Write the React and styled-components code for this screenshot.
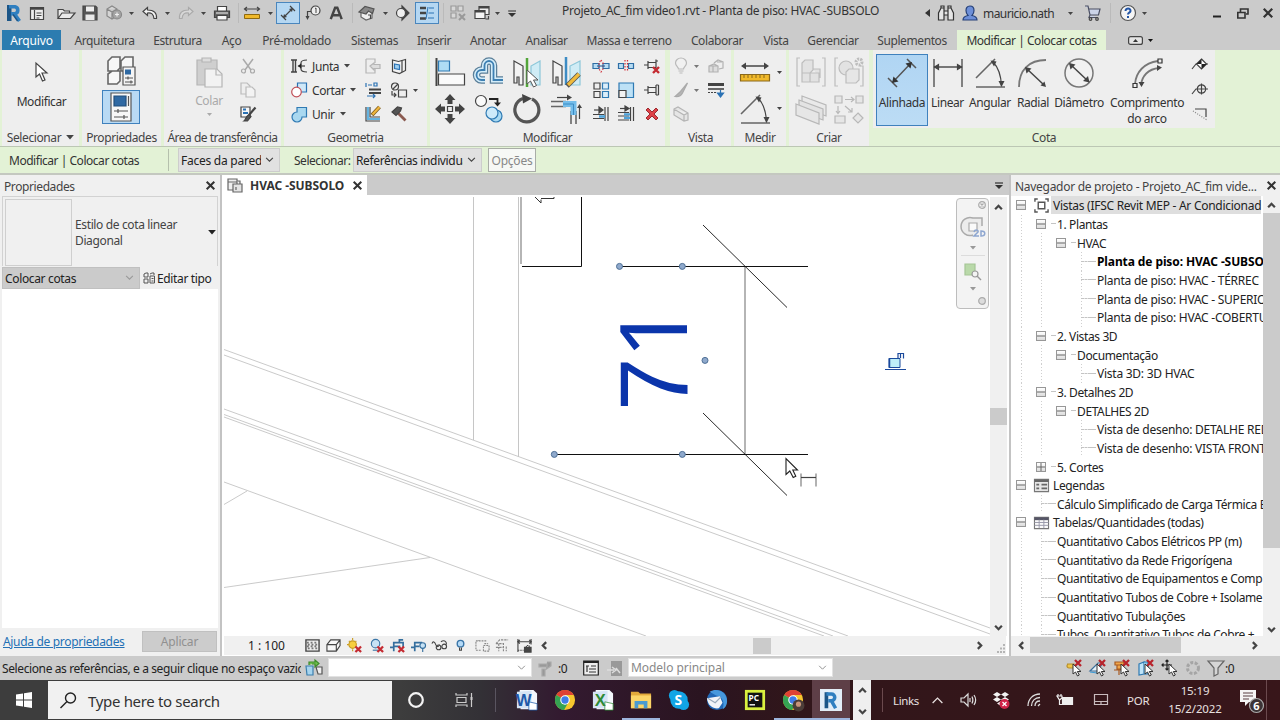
import styled, { createGlobalStyle, css } from 'styled-components';

const GlobalStyle = createGlobalStyle`
  * {
    box-sizing: border-box;
  }
  body {
    margin: 0;
    font-family: "Noto Sans", "Open Sans", sans-serif;
    font-size: 12px;
    color: #333;
    overflow: hidden;
  }
`;

const Glyph = styled.svg`
  display: block;
  flex: none;
  fill: none;
  stroke: #444;
  stroke-width: 1.2;
  overflow: visible;
`;

const Window = styled.div`
  display: flex;
  flex-direction: column;
  width: 1280px;
  height: 720px;
  background: #cbcbcb;
  overflow: hidden;
`;

const Label = styled.span`
  padding-top: 2px;
  white-space: nowrap;
  font-size: ${p => p.$size || 12}px;
  letter-spacing: ${p => p.$ls ?? -0.4}px;
  line-height: 16px;
  color: ${p => p.$color || 'inherit'};
`;

/* ---------- title bar ---------- */

const TitleBar = styled.header`
  display: flex;
  align-items: center;
  height: 30px;
  flex: none;
  padding: 0 6px 4px 4px;
`;

const Slot = styled.div`
  display: flex;
  align-items: center;
  justify-content: center;
  flex: none;
  width: ${p => p.$w}px;
  height: 22px;
  margin-left: ${p => p.$ml || 0}px;
  ${p => p.$on && css`
    background: #b5d7f2;
    border: 1px solid #4a86bd;
  `}
`;

const Divider = styled.div`
  flex: none;
  width: 1px;
  height: ${p => p.$h || 20}px;
  margin-left: ${p => p.$ml || 0}px;
  background: ${p => p.$color || '#bababa'};
`;

const WindowTitle = styled.div`
  margin-left: 45px;
  flex: 1;
  padding-bottom: 4px;
  line-height: 16px;
`;

/* ---------- tabs ---------- */

const TabRow = styled.nav`
  display: flex;
  align-items: center;
  height: 20px;
  flex: none;
  padding-left: 2px;
`;

const Tab = styled.div`
  display: flex;
  align-items: center;
  justify-content: center;
  flex: none;
  width: ${p => p.$w}px;
  height: 20px;
  background: ${p => p.$bg || 'transparent'};
  margin-right: ${p => p.$mr || 0}px;
`;

/* ---------- ribbon ---------- */

const Ribbon = styled.section`
  display: flex;
  flex: none;
  height: 97px;
  background: #e3f2d6;
  border-bottom: 1px solid #bcc7b4;
  padding-left: 2px;
`;

const PanelBox = styled.div`
  display: flex;
  flex-direction: column;
  flex: none;
  width: ${p => p.$w}px;
  margin-right: ${p => p.$mr ?? 3}px;
  background: ${p => (p.$green ? 'transparent' : '#eeeeee')};
`;

const PanelBody = styled.div`
  display: flex;
  height: 78px;
  padding: ${p => p.$pad || '4px 0 0'};
  background: #eeeeee;
`;

const PanelName = styled.div`
  display: flex;
  align-items: center;
  justify-content: center;
  gap: 5px;
  height: 18px;
`;

const Column = styled.div`
  display: flex;
  flex-direction: column;
  align-items: center;
  flex: none;
  width: ${p => p.$w}px;
  gap: ${p => p.$gap || 0}px;
  padding-top: ${p => p.$pt || 0}px;
`;

const ToolList = styled.div`
  flex: none;
  width: 76px;
  padding-left: 7px;
`;

const IconGrid = styled.div`
  display: grid;
  grid-template-columns: ${p => p.$cols};
  grid-auto-rows: ${p => p.$row}px;
  place-items: center;
  margin-left: ${p => p.$ml || 0}px;
  height: max-content;
`;

const Pressed = styled.div`
  display: flex;
  align-items: center;
  justify-content: center;
  width: 38px;
  height: 34px;
  background: #b9daf4;
  border: 1px solid #3f81bd;
`;

const ToolRow = styled.div`
  display: flex;
  align-items: center;
  height: 24px;
  gap: 5px;
`;

const Tool = styled.div`
  display: flex;
  flex-direction: column;
  align-items: center;
  flex: none;
  width: ${p => p.$w}px;
  height: 72px;
  padding-top: 3px;
  gap: 5px;
  text-align: center;
  border: 1px solid transparent;
  ${p => p.$on && css`
    margin-left: 3px;
    background: linear-gradient(#b0d5f3, #bcdcf5);
    border-color: #3f81bd;
  `}
  ${Label} {
    white-space: normal;
  }
`;

/* ---------- options bar ---------- */

const OptionsBar = styled.div`
  display: flex;
  align-items: center;
  flex: none;
  height: 28px;
  padding: 0 0 1px 9px;
  background: #e3f2d6;
  border-bottom: 2px solid #c4c8c0;
`;

const Select = styled.div`
  display: flex;
  align-items: center;
  flex: none;
  width: ${p => p.$w}px;
  height: ${p => p.$h || 24}px;
  padding: 0 5px 0 2px;
  margin-left: ${p => p.$ml || 0}px;
  background: ${p => p.$bg || '#e1e1e1'};
  border: 1px solid ${p => p.$border || '#cdcdcd'};
  color: ${p => p.$color || '#222'};
`;

const SelectText = styled.div`
  flex: 1;
  min-width: 0;
  overflow: hidden;
  white-space: nowrap;
  margin-right: 4px;
  padding-top: 1px;
  letter-spacing: ${p => p.$ls ?? -0.35}px;
  line-height: 17px;
`;

const OptionsButton = styled.button`
  flex: none;
  width: 48px;
  height: 24px;
  margin-left: 6px;
  padding: 1px 0 0;
  background: #f6f8f5;
  border: 1px solid #a9ada7;
  font: inherit;
  letter-spacing: -0.2px;
  color: #888;
`;

/* ---------- main area ---------- */

const Main = styled.main`
  display: flex;
  flex: none;
  height: 481px;
  background: #eeeeee;
`;

const SidePanel = styled.aside`
  display: flex;
  flex-direction: column;
  width: 220px;
  flex: none;
  background: #f0f0f0;
`;

const PanelHeader = styled.div`
  display: flex;
  align-items: center;
  justify-content: space-between;
  flex: none;
  height: 21px;
  padding: 0 5px 0 4px;
`;

const TypeSelector = styled.div`
  display: flex;
  align-items: center;
  height: 70px;
  margin: 0 2px;
  padding: 2px 1px 0 2px;
  border: 1px solid #d2d2d2;
  border-bottom: 0;
`;

const Thumb = styled.div`
  width: 67px;
  height: 67px;
  border: 1px solid #cfcfcf;
  margin-right: 3px;
`;

const TypeName = styled.div`
  flex: 1;
  line-height: 16px;
  letter-spacing: -0.37px;
  white-space: nowrap;
  color: #444;
`;

const FilterRow = styled.div`
  display: flex;
  align-items: center;
  height: 23px;
  padding-left: 2px;
`;

const PropertyGrid = styled.div`
  flex: 1;
  margin: 0 2px;
  background: #fff;
`;

const SideFooter = styled.div`
  display: flex;
  align-items: center;
  justify-content: space-between;
  height: 28px;
  padding: 0 3px 2px 3px;
`;

const HelpLink = styled.a`
  color: #2471b5;
  text-decoration: underline;
  letter-spacing: -0.32px;
  white-space: nowrap;
`;

const ApplyButton = styled.button`
  width: 75px;
  height: 21px;
  padding: 0;
  border: 1px solid #c0c0c0;
  background: #cccccc;
  color: #909090;
  font: inherit;
  letter-spacing: -0.2px;
`;

const Viewport = styled.section`
  display: flex;
  flex-direction: column;
  width: 791px;
  flex: none;
  border-left: 2px solid #c3c3c3;
  border-right: 2px solid #c3c3c3;
  background: #fff;
`;

const ViewTabs = styled.div`
  display: flex;
  justify-content: space-between;
  align-items: center;
  flex: none;
  height: 20px;
  background: #cbcbcb;
  padding-right: 6px;
  margin-bottom: 2px;
`;

const ViewTab = styled.div`
  display: flex;
  align-items: center;
  width: 145px;
  height: 20px;
  padding-left: 5px;
  gap: 8px;
  background: #fff;
  font-weight: 700;
`;

const ViewRow = styled.div`
  display: flex;
  flex: none;
  height: 439px;
  padding-left: 2px;
  position: relative;
`;

const ScrollV = styled.div`
  display: flex;
  flex-direction: column;
  align-items: center;
  justify-content: space-between;
  flex: none;
  width: 17px;
  padding: ${p => p.$pad || '6px 0 4px'};
  background: #f0f0f0;
`;

const ThumbV = styled.div`
  width: 17px;
  height: ${p => p.$h}px;
  margin-top: ${p => p.$mt}px;
  margin-bottom: auto;
  background: #cbcbcb;
`;

const ViewControls = styled.div`
  display: flex;
  align-items: center;
  flex: none;
  height: 19px;
  margin: 0 3px 0 2px;
  background: #f0f0f0;
`;

const ViewScale = styled.div`
  width: 80px;
  padding-left: 24px;
  line-height: 16px;
  color: #222;
`;

const ThumbH = styled.div`
  width: ${p => p.$w}px;
  height: 16px;
  margin-left: ${p => p.$ml}px;
  background: #cbcbcb;
`;

const NavBar = styled.div`
  position: absolute;
  left: 734px;
  top: 1px;
  width: 33px;
  height: 111px;
  display: flex;
  flex-direction: column;
  align-items: center;
  justify-content: space-between;
  padding: 2px 0 3px;
  border: 1px solid #bdbdbd;
  border-radius: 4px;
  background: #f3f3f3;
`;

const NavLine = styled.div`
  width: 24px;
  height: 1px;
  background: #dcdcdc;
`;

const NavDot = styled.div`
  align-self: flex-end;
  margin-right: 2px;
`;

/* ---------- project browser ---------- */

const Browser = styled.aside`
  display: flex;
  flex-direction: column;
  flex: 1;
  min-width: 0;
  background: #f0f0f0;
`;

const TreeArea = styled.div`
  display: flex;
  height: 440px;
  flex: none;
  background: #fff;
`;

const Tree = styled.div`
  width: 252px;
  overflow: hidden;
  color: #222;
`;

const TreeRow = styled.div`
  display: flex;
  align-items: center;
  height: 18.67px;
  white-space: nowrap;
  font-weight: ${p => (p.$bold ? 700 : 400)};
  color: ${p => (p.$bold ? '#000' : '#222')};
`;

const Cell = styled.div`
  display: flex;
  align-items: center;
  justify-content: center;
  flex: none;
  width: 20px;
  height: 100%;
  background: ${p => (p.$guide
    ? 'repeating-linear-gradient(#cfcfcf 0 1px, transparent 1px 3px) 10px 0 / 1px 100% no-repeat'
    : 'none')};
`;

const Dash = styled.div`
  flex: none;
  width: ${p => p.$w || 6}px;
  margin-left: ${p => p.$ml || 0}px;
  border-top: 1px dashed #c4c4c4;
`;

const Expander = styled.div`
  display: flex;
  align-items: center;
  justify-content: center;
  width: 10px;
  height: 10px;
  background: linear-gradient(#fff, #dcdcdc);
  border: 1px solid #979797;
`;

const TreeText = styled.div`
  flex: none;
  min-width: ${p => (p.$hl ? 210 : 0)}px;
  padding: 1px 0 0 ${p => (p.$root ? 2 : 1)}px;
  line-height: 17px;
  letter-spacing: ${p => p.$ls}px;
  background: ${p => (p.$hl ? '#dedede' : 'none')};
`;

const TreeScroll = styled.div`
  display: flex;
  align-items: center;
  height: 18px;
  width: 252px;
  padding-left: 6px;
`;

/* ---------- status bar ---------- */

const StatusBar = styled.footer`
  display: flex;
  align-items: center;
  flex: none;
  height: 24px;
  padding-left: 2px;
  background: #cbcbcb;
  color: #222;
`;

const StatusField = styled.div`
  width: 299px;
  overflow: hidden;
  white-space: nowrap;
  letter-spacing: -0.39px;
  line-height: 18px;
  padding-top: 1px;
`;

/* ---------- task bar ---------- */

const TaskBar = styled.footer`
  display: flex;
  align-items: center;
  flex: none;
  height: 40px;
  color: #e8e0e0;
  background: linear-gradient(90deg, #3d3d3d 0 400px, #333136 480px, #331a30 560px, #2a1420 700px, #31161a 800px, #38161a 1280px);
`;

const StartButton = styled.div`
  display: flex;
  align-items: center;
  justify-content: center;
  width: 48px;
  height: 40px;
`;

const SearchBox = styled.div`
  display: flex;
  align-items: center;
  width: 344px;
  height: 38px;
  padding-left: 12px;
  gap: 11px;
  background: #f1f1f1;
  color: #333;
  font-size: 15px;
`;

const TaskItem = styled.div`
  display: flex;
  align-items: center;
  justify-content: center;
  flex: none;
  width: ${p => p.$w || 38}px;
  height: 40px;
  margin-left: ${p => p.$ml || 0}px;
  background: ${p => (p.$active ? '#5e3f47' : 'transparent')};
  box-shadow: ${p => (p.$open ? 'inset 0 -2px 0 #9db5dd' : 'none')};
`;

const SpinBox = styled.div`
  display: flex;
  flex-direction: column;
  align-items: center;
  justify-content: space-between;
  width: 18px;
  height: 40px;
  margin-left: 3px;
  padding: 6px 0 4px;
  background: #efefef;
`;

const Clock = styled.div`
  width: 70px;
  margin-left: 8px;
  text-align: center;
  font-size: 11.5px;
  line-height: 18px;
  letter-spacing: -0.15px;
`;

/* ---------- icons ---------- */

const Svg = ({ w = 16, h = w, box, children, ...rest }) => (
  <Glyph width={w} height={h} viewBox={box || `0 0 ${w} ${h}`} {...rest}>{children}</Glyph>
);

const Caret = ({ w = 6, color = '#444' }) => (
  <Svg w={w} h={w / 2 + 0.5} box="0 0 6 3.5"><path d="M0 0h6L3 3.5z" fill={color} stroke="none" /></Svg>
);

const Chevron = ({ dir = 'down', size = 9, color = '#444', sw = 2 }) => {
  const d = {
    down: 'M1 2.5l3 3 3-3',
    up: 'M1 5.5l3-3 3 3',
    left: 'M5.5 1l-3 3 3 3',
    right: 'M2.5 1l3 3-3 3',
  }[dir];
  return <Svg w={size} box="0 0 8 8"><path d={d} stroke={color} strokeWidth={sw} /></Svg>;
};

const Cross = ({ size = 9, color = '#333', sw = 2 }) => (
  <Svg w={size} box="0 0 9 9"><path d="M.7.7l7.6 7.6M8.3.7L.7 8.3" stroke={color} strokeWidth={sw} /></Svg>
);

const RevitR = ({ w = 16, h = 18 }) => (
  <Svg w={w} h={h} box="0 0 16 18">
    <path d="M1 1h4.500v16H1z" fill="#1b5587" stroke="none" />
    <path d="M3 2.800h6a3.600 3.600 0 010 7H5M8.500 10l5 7" stroke="#2f7fc0" strokeWidth="3.600" />
    <path d="M7 10.500l4.600 6.500" stroke="#1b5587" strokeWidth="1.400" />
  </Svg>
);

const RedX = () => <path d="M9 9l6 6M15 9l-6 6" stroke="#c42b32" strokeWidth="2.400" />;

const small = {
  props: <><path d="M1.500 2.500h13v12h-13z" fill="#eee" /><path d="M1.500 3.500h13" strokeWidth="2.500" /><path d="M5.500 5v9M7.500 8h5M7.500 10.500h5M7.500 13h3" /></>,
  open: <path d="M0 13.500V4.500h5l1.500 1.500h5v2M0 13.500l4-5.500h13l-4.500 5.500z" fill="#e9e9e9" />,
  save: <><path d="M1 1h12.500L15 2.500V15H1z" fill="#555" stroke="#444" /><path d="M4 1.500h8v5H4z" fill="#eee" stroke="none" /><path d="M3.500 9.500h9V15h-9z" fill="#e8e8e8" stroke="none" /></>,
  sync: <g stroke="#888"><path d="M1 4l5-3 5 3v7l-5 3-5-3zM1 4l5 3 5-3M6 7v7" fill="#d5d5d5" /><circle cx="11" cy="9.500" r="4.500" fill="#a5a5a5" /><path d="M9 9.500h4M11 7.500v4" stroke="#eee" /></g>,
  undo: <path d="M5.500 2.500L1 6.500l4.500 4V8c4-.5 6 1 6.500 5.500h2.500C15 8 12 5 5.500 5z" fill="#f4f4f4" />,
  redo: <path d="M10.500 2.500L15 6.500l-4.500 4V8C6.500 7.500 4.500 9 4 13.500H1.500C1 8 4 5 10.500 5z" fill="#d8d8d8" stroke="#aaa" />,
  print: <><path d="M3.500 6V1.500h9V6" fill="#fff" /><path d="M.5 6h15v6.500H.5z" fill="#666" /><path d="M3 10.500h10v4.500H3z" fill="#f7f7f7" /><path d="M2 8h12" stroke="#ddd" /></>,
  measure: <><path d="M1 4h14M3 2L.5 4 3 6M13 2l2.500 2L13 6" /><path d="M.5 9.500h15v4H.5z" fill="#f0b92a" stroke="#8f6a10" strokeWidth="1" /></>,
  aligned: <><path d="M3.500 12.500l9-9M1 10l5 5M10 1l5 5" /><path d="M3 13l1-4 3 3zM13 3L9 4l3 3z" fill="#444" stroke="none" /></>,
  tag: <><circle cx="10.500" cy="5.500" r="4.500" fill="#eee" /><path d="M10 3.500l1-.5v5" strokeWidth="1" /><path d="M6 6.500H2.500V13" /><path d="M.5 11h4l-2 4z" fill="#444" stroke="none" /></>,
  letter: <path d="M2 15L7 2h2.500l5 13M4.500 10.500h7" strokeWidth="2.800" />,
  home: <><path d="M2 6v6l5 3 6-2V7" fill="#eee" stroke="#666" /><path d="M0 7l6-5.500L15 4l-1.500 4.500-4-2.500L7 9z" fill="#888" stroke="#555" /><path d="M9 10h2.500v4" /></>,
  section: <><path d="M8 1l7 7-7 7z" fill="#444" /><circle cx="7" cy="8" r="4.500" fill="#eee" /></>,
  thin: <><path d="M1 3h6M1 8h6M1 13.500h6" strokeWidth="2.500" /><path d="M9 2l-2 12M10 3h5M9.500 8H15M9 13h6" stroke="#2b72b4" strokeWidth="1" /></>,
  closeHidden: <g stroke="#999"><path d="M1 1h5v5H1zM8 1h5v5H8zM1 8h5v5H1z" fill="#d8d8d8" /><path d="M9 9l6 6M15 9l-6 6" strokeWidth="2" /></g>,
  switchWin: <><path d="M5 1.500h10v8H5z" fill="#eee" /><path d="M1 5.500h10v8H1z" fill="#f5f5f5" /><path d="M1 6.500h10M5 2.500h10" strokeWidth="2" /><path d="M14.500 11v3h-3" /></>,
  cut: <g stroke="#aaa"><path d="M3 1l8 11M13 1L5 12" strokeWidth="1.500" /><circle cx="3.500" cy="13" r="2" /><circle cx="12.500" cy="13" r="2" /></g>,
  copy: <g stroke="#bbb"><path d="M1 1h6l3 3v8H1z" fill="#eee" /><path d="M6 5h6l3 3v7H6z" fill="#f3f3f3" /></g>,
  match: <><path d="M1 1h9v10H1z" fill="#f7f7f7" /><path d="M3 3.500h3M3 7h5" stroke="#2b72b4" strokeWidth="2" /><path d="M15.500 1.500L9 9" strokeWidth="2.200" /><path d="M9 8.500l2 2-3.500 4.500H4c2-1.500 1-4 5-6.500z" fill="#555" /></>,
  join: <><path d="M0 2h6M0 14h6M2 2v12M4.500 2v12" strokeWidth="1.400" /><path d="M16 2c-4 0-6 1-6 3s-1 3-2.500 3c1.500 0 2.500 1 2.500 3s2 3 6 3" /><path d="M14 8H8" /><path d="M10.500 5.500v5L6.500 8z" fill="#222" stroke="none" /></>,
  cutGeo: <><path d="M6.500 1h9v9h-9z" fill="#cfe8f8" stroke="#2b72b4" /><circle cx="5.500" cy="10" r="4.800" fill="#fff" stroke="#c05058" /></>,
  unite: <path d="M6 1.500h9.500V11H11a5 5 0 11-5-5z" fill="#a9d8f0" stroke="#2f7ab3" />,
  cope: <g stroke="#b5b5b5"><path d="M1 1h9v4M1 1v14h9v-4" fill="#eee" /><path d="M5 8l4-3v1.500h6v4H9V12z" fill="#ddd" /></g>,
  face: <><path d="M1.500 2l6 1.500 7-2v11l-6 3-7-2z" fill="#f3f3f3" /><path d="M11 2.500v11.500" /><path d="M3.500 6l5 1v4.500l-5-1z" fill="#9fd0f0" stroke="#2b72b4" /></>,
  wallJoin: <><path d="M1 1v4M3 3h4M9 1h3v3H9zM2 14h8M8 12l2 2-2 2" stroke="#2b72b4" /><path d="M4 7.500h12M4 11h12" strokeWidth="1.800" /></>,
  demolish: <><circle cx="4" cy="4.500" r="3.500" /><path d="M2 7l5-5" /><path d="M7.500 8h8v7h-8z" fill="#eee" /><path d="M1 9v4h4M3 11l2 2-2 2" /></>,
  paintEdit: <><path d="M1 1v14h14M5 1v10h10" /><path d="M3 1v12H15" stroke="#64b3e0" strokeWidth="2.200" /><path d="M14.500 1L7 9" stroke="#7a5a1c" strokeWidth="3.800" /><path d="M14.500 1L7.500 8.500" stroke="#efb53c" strokeWidth="2.300" /></>,
  hammer: <><path d="M7 7l7.500 7.500" stroke="#8a5a50" strokeWidth="2.800" /><path d="M1 6l5.500-5 4 1-1 3L5 9.500z" fill="#555" /></>,
  split: <><path d="M0 5.500h6v5H0zM10 5.500h6v5h-6z" fill="#b7dcf3" stroke="#2f6ea5" /><path d="M8 2l2 3v6l-2 3-2-3V5z" stroke="#d0303a" strokeDasharray="1.500 1.500" /><path d="M4 8h8" stroke="#2f6ea5" /></>,
  splitGap: <><path d="M.5 5.500h5v5h-5zM10.500 5.500h5v5h-5z" fill="#b7dcf3" stroke="#2f6ea5" /><path d="M7 2v12M9.500 2v12" stroke="#d0303a" strokeDasharray="1.500 1.500" /></>,
  unpin: <><path d="M0 7h4M4 3v8M12 1.500v11M4 4.500h8M4 9.500h8M12 3h2M12 11h2" /><RedX /></>,
  pin: <><path d="M0 8h4M4 4v8M12 3v10M4 5.500h8M4 10.500h8M14.500 3v10M12 3h2.500M12 13h2.500" /></>,
  array: <><path d="M1 1h6v6H1zM1 9.500h6v6H1z" /><path d="M9.500 1h6v6h-6zM9.500 9.500h6v6h-6z" fill="#dceefa" stroke="#2f7ab3" /></>,
  scale: <><path d="M1 1h14.500v14.500H1z" fill="#bde1f6" stroke="#2f7ab3" /><path d="M1 8.500h7v7H1z" fill="#f2f2f2" /></>,
  trim: <><path d="M1 4h7" /><path d="M6 1l4 3-4 3zM12 1v14M15 1v14" fill="#444" /><path d="M0 8.500h11M0 12.500h11" /><path d="M6 10.500h6" stroke="#4da3db" strokeWidth="2.500" /></>,
  trimMulti: <><path d="M2 2.500h6" /><path d="M7 0l4 2.500L7 5zM12.500 1v14M15.500 1v14" fill="#444" /><path d="M0 6.500h11M0 10h11M0 14h11" /><path d="M6 7.200h6v2.200H6zM6 10.800h6V13H6z" fill="#4da3db" stroke="none" /></>,
  remove: <path d="M2 4l2-2 4 4 4-4 2 2-4 4 4 4-2 2-4-4-4 4-2-2 4-4z" fill="#dd4147" stroke="#9d2a30" strokeWidth="1" />,
  bulb: <g stroke="#b9b9b9"><path d="M5.500 11c0-2-3-3-3-6a5.500 5 0 0111 0c0 3-3 4-3 6z" fill="#f1f1f1" /><path d="M5.500 13h5M6.500 15h3" /></g>,
  brush: <path d="M14.500 1l-7 8.500L2 14.500c3.500.5 6-.5 7.500-3.500z" fill="#b5b5b5" stroke="#aaa" />,
  hideBox: <g stroke="#b5b5b5"><path d="M1 3l4-2 10 6v7l-4 1-10-6zM1 3l10 6 4-2M11 9v6" fill="#e5e5e5" /></g>,
  boxes: <g stroke="#b2b2b2"><path d="M1 8l5-2 4 2v6H1zM1 8h9M5 8v6" fill="#ddd" /><path d="M6 5l4-3 5 2v6l-4 1M9 4h5" /></g>,
  lines: <><path d="M0 2.500h16" strokeWidth="3" /><path d="M0 7h16" strokeWidth="1.600" /><path d="M0 10.500h9" strokeDasharray="2 1" /><path d="M12.500 8v4M9.500 11h6l-3 4z" fill="#2b72b4" stroke="#2b72b4" /></>,
  spot: <><path d="M0 11l4-5h12" /><path d="M9.500 1l5 5-5 5-5-5z" fill="#fff" /><path d="M9.500 1v5h5l-5 5V6h-5z" fill="#222" stroke="none" /></>,
  spotCoord: <><path d="M0 12l4-5h12" /><circle cx="9.500" cy="7" r="4.200" /><path d="M9.500 1.500v11" /></>,
  slope: <><path d="M3 3h11v8" /><path d="M1 5l14 9" stroke="#888" strokeDasharray="1 1.500" /></>,
};

const omega = 'M29 23H19.500V8.500a4.500 4.500 0 00-9 0V13H7.500a5 5 0 000 10H11';

const large = {
  align: <><path d="M1.500 1v28" strokeWidth="2" /><path d="M3.500 4h11v10h-11z" fill="#aedcf4" stroke="#2f7ab3" /><path d="M3.500 17h26v11h-26z" fill="#fafafa" /></>,
  offset: <><path d={omega} strokeWidth="7.500" stroke="#5b7f99" /><path d={omega} strokeWidth="5" stroke="#d4edfa" /><path d={omega} strokeWidth="1.800" stroke="#3d7fb2" /></>,
  mirrorPick: <><path d="M2 4l9 5v19H7v-8H5v6H2z" fill="#f2f2f2" /><path d="M28 4l-9 5v19h9z" fill="#d0ecf5" stroke="#8cc7d9" /><path d="M15 1v29" stroke="#52a539" strokeWidth="2.500" /><path d="M15 13v14l3.500-3 3 6 3-1.500-3-5.500h4.500z" fill="#fff" stroke="#555" strokeWidth="1" /></>,
  mirrorDraw: <><path d="M2 4l9 5v19H7v-8H5v6H2z" fill="#f2f2f2" /><path d="M29 4l-10 5v19h10z" fill="#d0ecf5" stroke="#8cc7d9" /><path d="M15 0v28" stroke="#3d8cc4" strokeWidth="2.500" /><path d="M28 17L16 29" stroke="#555" strokeWidth="5" /><path d="M28 17L17 28" stroke="#f0bb3d" strokeWidth="3.200" /></>,
  move: <g fill="#444" stroke="none"><path d="M15 0l5.500 6h-3v4h-5V6h-3zM15 30l5.500-6h-3v-4h-5v4h-3zM0 15l6-5.500v3h4v5H6v3zM30 15l-6-5.500v3h-4v5h4v3z" /><path d="M12.500 12.500h5v5h-5z" fill="#eee" stroke="#444" /></g>,
  copyMove: <><circle cx="7" cy="7" r="5.500" fill="#fafafa" /><path d="M15 5h8.500v5" stroke="#222" strokeWidth="1.800" /><path d="M20 8.500h7l-3.500 4z" fill="#222" stroke="none" /><circle cx="22" cy="22" r="6" fill="#a8d9f2" stroke="#2f7ab3" /><circle cx="18" cy="19" r="6" fill="#cdeafa" stroke="#2f7ab3" /></>,
  rotate: <><path d="M20 5a12 12 0 11-9-.5" strokeWidth="3.200" stroke="#555" /><path d="M10 0l10 4.500-9 5z" fill="#444" stroke="none" /></>,
  corner: <><path d="M6 3.500h11" /><path d="M16 .5l5 3-5 3z" fill="#444" stroke="none" /><path d="M0 7.500h15M0 12.500h15M20 17v13M25 17v13" stroke="#666" strokeWidth="1.600" /><path d="M12 10h10.500v11" stroke="#74bdea" strokeWidth="6" /><path d="M12 10h10.500v11" stroke="#3d8cc4" strokeWidth="1" /><path d="M28.500 25V13" /><path d="M26 14l2.500-4 2.500 4z" fill="#444" stroke="none" /></>,
  measure: <><path d="M3 9h24" strokeWidth="1.500" /><path d="M6 5.500L1 9l5 3.500zM24 5.500L29 9l-5 3.500z" fill="#444" stroke="none" /><path d="M.5 17.500h29v6.500H.5z" fill="#f0b92a" stroke="#8a681a" /><path d="M4 18v3M8 18v3M12 18v3M16 18v3M20 18v3M24 18v3" stroke="#8a681a" strokeWidth="1" /></>,
  angle: <><path d="M1 20L20 1M1 29h29" stroke="#666" strokeWidth="1.600" /><path d="M18 4c5 5 8 13 8.500 24" stroke="#444" /><path d="M15.500 2.500l6 1-2.500 5zM23.500 23h6l-3 6z" fill="#444" stroke="none" /></>,
  linear: <><path d="M1 1v28M29 1v28" stroke="#666" strokeWidth="1.600" /><path d="M1 9h28" stroke="#444" strokeWidth="1.400" /><path d="M1.500 9l4-2.500v5zM28.500 9l-4-2.500v5z" fill="#444" /></>,
  aligned: <><path d="M6 24L24 5M1 20l9 9M20 1l9 9" stroke="#555" strokeWidth="1.500" /><path d="M5 25l1.500-6.500 5 5zM25 4l-6.500 1.500 5 5z" fill="#333" stroke="none" /></>,
  radial: <><path d="M1 29C1 12 11 2 28 2" stroke="#777" strokeWidth="1.800" /><path d="M8 10l18 17" stroke="#444" strokeWidth="1.500" /><path d="M7 9l6.500 1.500-5 5zM28 29l-5.500-1.500 4-4z" fill="#444" stroke="none" /></>,
  diameter: <><circle cx="15" cy="15" r="14" fill="#f1f1f1" stroke="#777" strokeWidth="1.500" /><path d="M6 6l19 18" stroke="#444" strokeWidth="1.500" /><path d="M5 5l6.500 1.500-5 5zM25.500 24.500L19 23l5-5z" fill="#444" stroke="none" /></>,
  arc: <><path d="M3 26C4 14 12 5 26 3M9 27C10 18 16 11 27 10" stroke="#777" strokeWidth="1.800" /><path d="M1 25.500h4v4H1zM26 1h4v4h-4z" fill="#eee" stroke="#333" /><path d="M6.500 24h6L9.500 29zM25 7l5 2.500-5 3.500z" fill="#444" stroke="none" /></>,
  createA: <g stroke="#bdbdbd"><path d="M4 1H1v28h3M26 1h3v28h-3" /><path d="M6 6l3-3h8v10l-3 3H6zM6 16h17v9H6zM14 16v9M17 12h7v9" fill="#e2e2e2" /></g>,
  createB: <g stroke="#bdbdbd"><path d="M4 1H1v28h3M26 9h3v20h-3" /><circle cx="12" cy="11" r="7" fill="#e2e2e2" /><path d="M12 15l3-3h10v11l-3 3H12z" fill="#e6e6e6" /><circle cx="25" cy="5" r="3" strokeDasharray="2 1" strokeWidth="3" /></g>,
  createC: <g stroke="#b8b8b8"><path d="M6 2l24 9v11L6 13z" fill="#e9e9e9" /><path d="M3 6l24 9v11L3 17z" fill="#e3e3e3" /><path d="M0 10l23 9v11L0 21z" fill="#e6e6e6" /></g>,
  createD: <g stroke="#b8b8b8"><path d="M1 2h7v7H1zM22 2h7v7h-7zM1 22h10v7H1zM24 19l5 5-5 5-5-5z" fill="#e6e6e6" /><path d="M11 5.500h9M17 3l3 2.500L17 8M4 12v7M2 17l2 2.500L6 17M11 12l7 6M18 14v4h-4" /></g>,
  paste: <g stroke="#b5b5b5"><path d="M3 3h20v25H3z" fill="#cfcfcf" /><path d="M8 1h9v4H8z" fill="#ddd" /><path d="M11 12h12l5 5v13H11z" fill="#f2f2f2" /><path d="M22 12v6h6" /></g>,
  typeProps: <><path d="M2 5l4-4h8v11l-3 3H2zM15 5l4-4h8v11l-3 3h-9zM2 18l4-3h8v10l-3 3H2z" fill="#f7f7f7" stroke="#666" strokeWidth="1.600" /><path d="M17 11h12v18H17z" fill="#f4f4f4" stroke="#555" /><path d="M19 13.500h6v5h-6z" fill="#2f69a3" stroke="none" /><path d="M19 22h8M19 26h8M22 20.500v3M25 24.500v3" stroke="#555" /></>,
  properties: <><path d="M5 1h20v28H5z" fill="#f7f7f7" stroke="#555" /><path d="M8 4h12v10H8z" fill="#2f69a3" stroke="#234f7b" /><path d="M22.500 4v10M8 19h14M8 25h14M12 17v4M18 23v4" stroke="#555" /></>,
};

const Sm = ({ n, w = 16 }) => <Svg w={w} box="0 0 16 16">{small[n]}</Svg>;
const Lg = ({ n, w = 30 }) => <Svg w={w} box="0 0 30 30">{large[n]}</Svg>;

const Pointer = ({ w = 13, h = 20 }) => (
  <Svg w={w} h={h} box="0 0 13 20"><path d="M1 1v14l3.500-3 3 7 2.500-1-3-7h5z" fill="#fff" stroke="#444" /></Svg>
);

/* ---------- sections ---------- */

const quickAccess = [
  ['props', 18, 4], ['open', 18, 11], ['save', 16, 7], ['sync', 16, 8], ['caret', 6, 6],
  ['undo', 16, 8], ['caret', 6, 6], ['redo', 16, 8], ['caret', 6, 6], ['print', 18, 7], ['sep', 1, 7],
  ['measure', 16, 5], ['caret', 6, 7], ['aligned', 24, 3, true], ['tag', 16, 5], ['letter', 16, 7],
  ['sep', 1, 8], ['home', 16, 6], ['caret', 6, 7], ['section', 14, 7], ['thin', 24, 6, true],
  ['sep', 1, 4], ['closeHidden', 16, 6], ['switchWin', 18, 7], ['caret', 6, 3],
];

function Header() {
  return (
    <TitleBar>
      <Slot $w={20}><RevitR /></Slot>
      {quickAccess.map(([name, w, ml, on], i) => {
        if (name === 'sep') return <Divider key={i} $ml={ml} />;
        return (
          <Slot key={i} $w={w} $ml={ml} $on={on}>
            {name === 'caret' ? <Caret w={5} /> : <Sm n={name} w={name === 'letter' ? 14 : 16} />}
          </Slot>
        );
      })}
      <Slot $w={10} $ml={7}><Svg w={8} h={7}><path d="M0 1h8" /><path d="M0 3h8L4 7z" fill="#333" stroke="none" /></Svg></Slot>
      <WindowTitle><Label $ls={-0.26}>Projeto_AC_fim video1.rvt - Planta de piso: HVAC -SUBSOLO</Label></WindowTitle>
      <Slot $w={6}><Svg w={5} h={8}><path d="M5 0v8L0 4z" fill="#333" stroke="none" /></Svg></Slot>
      <Slot $w={18} $ml={7}>
        <Svg w={16}><path d="M.5 15V8L3 3h3v12zM15.500 15V8L13 3h-3v12zM6 6h4v4H6zM3 3V1h3v2M10 3V1h3v2" fill="#e5e5e5" stroke="#333" /></Svg>
      </Slot>
      <Slot $w={16} $ml={7}>
        <Svg w={16}><path d="M8 1c3 0 4 2 4 4.500S10.500 10 10 10.500c2.500.5 5 1.500 5 4.500H1c0-3 2.500-4 5-4.500C5.500 10 4 8 4 5.500S5 1 8 1z" fill="#6d8fd8" stroke="#264178" /></Svg>
      </Slot>
      <Slot $w={78} $ml={5} style={{ justifyContent: 'flex-start' }}><Label $ls={-0.58}>mauricio.nath</Label></Slot>
      <Slot $w={6} $ml={6}><Caret w={5} /></Slot>
      <Slot $w={17} $ml={11}>
        <Svg w={16}><path d="M0 1h3l2 9h8.500L15 4H4M5 10l-1 2.500h9" fill="#ccd4e8" stroke="#4a4f63" /><circle cx="5.500" cy="14" r="1.300" /><circle cx="12" cy="14" r="1.300" /></Svg>
      </Slot>
      <Divider $ml={9} />
      <Slot $w={17} $ml={8}>
        <Svg w={16}><circle cx="8" cy="8" r="7.500" fill="#f5f5f5" stroke="#555" /><path d="M5.500 6c0-3.500 5.500-3 5 0-.3 1.800-2.500 1.500-2.500 3.500M8 11v2" stroke="#2456a6" strokeWidth="2" /></Svg>
      </Slot>
      <Slot $w={6} $ml={5}><Caret w={5} /></Slot>
      <Slot $w={8} $ml={66}><Svg w={8} h={10}><path d="M0 8.500h8" strokeWidth="2" stroke="#222" /></Svg></Slot>
      <Slot $w={13} $ml={15}><Svg w={12} h={11}><path d="M3.500 4V1H11v5H9M.8 4.500H8V10H.8z" strokeWidth="1.600" stroke="#333" /></Svg></Slot>
      <Slot $w={12} $ml={13}><Cross size={10} /></Slot>
    </TitleBar>
  );
}

const tabs = [
  ['Arquitetura', 79], ['Estrutura', 67], ['Aço', 41], ['Pré-moldado', 89], ['Sistemas', 67],
  ['Inserir', 52], ['Anotar', 56], ['Analisar', 61], ['Massa e terreno', 104], ['Colaborar', 72],
  ['Vista', 46], ['Gerenciar', 68], ['Suplementos', 90],
];

function RibbonTabs() {
  return (
    <TabRow>
      <Tab $w={59} $bg="#2c7cb0" $mr={4}><Label $color="#fff" $ls={-0.15}>Arquivo</Label></Tab>
      {tabs.map(([name, w]) => <Tab key={name} $w={w}><Label $color="#444">{name}</Label></Tab>)}
      <Tab $w={149} $bg="#e3f2d6"><Label $ls={-0.46}>Modificar | Colocar cotas</Label></Tab>
      <Slot $w={16} $ml={21}>
        <Svg w={15} h={9}><rect x=".6" y=".6" width="13.800" height="7.800" rx="2" fill="#e4e4e4" /><path d="M5 6l2.500-3L10 6z" fill="#333" stroke="none" /></Svg>
      </Slot>
      <Slot $w={6} $ml={4}><Caret w={5} color="#111" /></Slot>
    </TabRow>
  );
}

function Panel({ name, w, mr, pad, green, caret, ls, children }) {
  return (
    <PanelBox $w={w} $mr={mr} $green={green}>
      <PanelBody $pad={pad}>{children}</PanelBody>
      <PanelName>
        <Label $color="#444" $ls={ls}>{name}</Label>
        {caret && <Caret w={8} />}
      </PanelName>
    </PanelBox>
  );
}

const modifyLarge = ['align', 'offset', 'mirrorPick', 'mirrorDraw', 'move', 'copyMove', 'rotate', 'corner'];
const modifySmall = ['split', 'splitGap', 'unpin', 'array', 'scale', 'pin', 'trim', 'trimMulti', 'remove'];
const dimensions = [
  ['Linear', 'linear', 39], ['Angular', 'angle', 46], ['Radial', 'radial', 40],
  ['Diâmetro', 'diameter', 52], ['Comprimento do arco', 'arc', 84],
];

function RibbonPanels() {
  return (
    <Ribbon>
      <Panel name="Selecionar" w={77} caret>
        <Column $w={79} $pt={8} $gap={10}>
          <Pointer />
          <Label>Modificar</Label>
        </Column>
      </Panel>
      <Panel name="Propriedades" w={79}>
        <Column $w={78} $pt={2} $gap={4}>
          <Lg n="typeProps" />
          <Pressed><Lg n="properties" /></Pressed>
        </Column>
      </Panel>
      <Panel name="Área de transferência" w={117} ls={-0.5}>
        <Column $w={90} $pt={3} $gap={4}>
          <Lg n="paste" />
          <Label $color="#aaa">Colar</Label>
          <Caret w={5} color="#aaa" />
        </Column>
        <IconGrid $cols="16px" $row={24} $ml={-14}>
          <Sm n="cut" /><Sm n="copy" /><Sm n="match" />
        </IconGrid>
      </Panel>
      <Panel name="Geometria" w={143}>
        <ToolList>
          <ToolRow><Sm n="join" /><Label>Junta</Label><Caret /></ToolRow>
          <ToolRow><Sm n="cutGeo" /><Label>Cortar</Label><Caret /></ToolRow>
          <ToolRow><Sm n="unite" /><Label>Unir</Label><Caret /></ToolRow>
        </ToolList>
        <IconGrid $cols="26px 26px 6px" $row={24}>
          <Sm n="cope" /><Sm n="face" /><span />
          <Sm n="wallJoin" /><Sm n="demolish" /><Caret w={5} />
          <Sm n="paintEdit" /><Sm n="hammer" /><span />
        </IconGrid>
      </Panel>
      <Panel name="Modificar" w={235} mr={5}>
        <IconGrid $cols="repeat(4, 38.600px)" $row={36.5} $ml={1}>
          {modifyLarge.map(n => <Lg key={n} n={n} />)}
        </IconGrid>
        <IconGrid $cols="25px 26px 26px" $row={24} $ml={3}>
          {modifySmall.map(n => <Sm key={n} n={n} />)}
        </IconGrid>
      </Panel>
      <Panel name="Vista" w={61}>
        <IconGrid $cols="20px 10px 30px" $row={24} $ml={1}>
          <Sm n="bulb" /><Caret w={5} color="#777" /><Sm n="boxes" />
          <Sm n="brush" /><Caret w={5} color="#777" /><Sm n="lines" />
          <Sm n="hideBox" />
        </IconGrid>
      </Panel>
      <Panel name="Medir" w={52}>
        <IconGrid $cols="34px 14px" $row={36.5} $ml={4}>
          <Lg n="measure" /><Caret w={5} /><Lg n="angle" /><Caret w={5} />
        </IconGrid>
      </Panel>
      <Panel name="Criar" w={80} mr={4}>
        <IconGrid $cols="38px 37px" $row={36.5} $ml={3}>
          <Lg n="createA" /><Lg n="createB" /><Lg n="createC" /><Lg n="createD" />
        </IconGrid>
      </Panel>
      <Panel name="Cota" w={342} green>
        <Tool $w={52} $on><Lg n="aligned" /><Label>Alinhada</Label></Tool>
        {dimensions.map(([name, icon, w]) => (
          <Tool key={name} $w={w}>
            <Lg n={icon} />
            <Label>{name}</Label>
          </Tool>
        ))}
        <IconGrid $cols="16px" $row={24} $ml={3}>
          <Sm n="spot" /><Sm n="spotCoord" /><Sm n="slope" />
        </IconGrid>
      </Panel>
    </Ribbon>
  );
}

function Options() {
  return (
    <OptionsBar>
      <Label $ls={-0.47} style={{ width: 159 }}>Modificar | Colocar cotas</Label>
      <Divider $h={22} $color="#b5c0ad" />
      <Select $w={102} $ml={9}><SelectText $ls={-0.25}>Faces da parede</SelectText><Chevron sw={1} /></Select>
      <Label $ls={-0.47} style={{ marginLeft: 14, width: 59 }}>Selecionar:</Label>
      <Select $w={129}><SelectText>Referências individuais</SelectText><Chevron sw={1} /></Select>
      <OptionsButton>Opções</OptionsButton>
    </OptionsBar>
  );
}

function Properties() {
  return (
    <SidePanel>
      <PanelHeader><Label $color="#444">Propriedades</Label><Cross size={9} /></PanelHeader>
      <TypeSelector>
        <Thumb />
        <TypeName>Estilo de cota linear<br />Diagonal</TypeName>
        <Caret w={8} color="#222" />
      </TypeSelector>
      <FilterRow>
        <Select $w={138} $h={22} $bg="#cbcbcb" $border="#c0c0c0">
          <SelectText>Colocar cotas</SelectText><Chevron sw={0.9} color="#999" />
        </Select>
        <Slot $w={12} $ml={3}>
          <Svg w={12}><path d="M1 2l2-1h2v4H1zM1 7h4v4H1zM7 2l2-1h2v2M7 4h4.500v7H7zM8.500 6.500h2M8.500 9h2" stroke="#555" strokeWidth="1" /></Svg>
        </Slot>
        <Label $color="#222" $ls={-0.35} style={{ marginLeft: 2 }}>Editar tipo</Label>
      </FilterRow>
      <PropertyGrid />
      <SideFooter><HelpLink>Ajuda de propriedades</HelpLink><ApplyButton>Aplicar</ApplyButton></SideFooter>
    </SidePanel>
  );
}

const walls = [
  'M224 349.500L990 628', 'M224 355L990 634', 'M224 409L848 636', 'M224 414.500L833 636',
  'M224 417L824 636', 'M224 482L646 636', 'M224 504.500L247 491', 'M224 587.500L430 557.500',
];
const handles = [[619.5, 266.4], [682.3, 266.4], [705, 360.4], [554.3, 454.4], [682.3, 454.4]];

function Drawing() {
  return (
    <Svg w={766} h={439} box="224 197 766 439" style={{ overflow: 'hidden' }}>
      <g stroke="#bcbcbc" strokeWidth=".8">{walls.map(d => <path key={d} d={d} />)}</g>
      <path d="M473.500 197v243M518.500 197v260" stroke="#c6c6c6" strokeWidth="1" />
      <path d="M521 197v67" stroke="#b5b5b5" strokeWidth="2" />
      <path d="M522 266.500h59.500V197" stroke="#111" strokeWidth="1" />
      <path d="M535 197l6 6v-3.500M541 198.500h13V197" stroke="#333" strokeWidth="1" />
      <path d="M745 267v187" stroke="#b5b5b5" strokeWidth="2" />
      <path d="M619 266.500h189M554 454.500h254" stroke="#111" strokeWidth="1" />
      <path d="M703 225l84 82.500M703 413l84 82.500" stroke="#111" strokeWidth=".9" />
      {handles.map(([x, y]) => (
        <circle key={`${x}-${y}`} cx={x} cy={y} r="3" fill="#8fa9cc" stroke="#4f7096" strokeWidth="1" />
      ))}
      <g transform="translate(687 411) rotate(-90)" fontSize="96" fill="#0b35ab" stroke="none">
        <text fontFamily="Liberation Sans, Arial, sans-serif">7</text>
        <text x="52.500" fontSize="94" fontFamily="Noto Sans, sans-serif">1</text>
      </g>
      <path d="M889 358.500h11v9h-11z" fill="#bdeef8" stroke="#1b4a9c" strokeWidth="1" />
      <path d="M889.500 358v10" stroke="#1b4a9c" strokeWidth="1.500" />
      <path d="M897.500 353.500h6v5M898 353v5M900.500 354v4M885 369.500h21" stroke="#1b4a9c" strokeWidth="1.200" />
      <path d="M786 458.500v16l3.800-3.500 3.400 6.500 2.600-1.300-3-6.200h4.700z" fill="#fff" stroke="#222" strokeWidth="1.100" />
      <path d="M801 473.500v13M816 473.500v13" stroke="#999" strokeWidth="1.500" />
      <path d="M801 477.500h15" stroke="#444" />
    </Svg>
  );
}

const viewIcons = [
  [<><path d="M1 2h14v12H1z" fill="#eee" strokeWidth="1.500" /><path d="M2 5h12M3 7h12M2 9h12M3 11h12" stroke="#777" strokeDasharray="2 2" strokeWidth="1.800" /></>, 0],
  [<path d="M1 7l4-5h10v6l-4 6H1zM1 7h10v7M11 7l4-5" fill="#f7f7f7" />, 5],
  [<><circle cx="6" cy="7" r="4" fill="#f7cf3f" stroke="#c99c24" /><path d="M6 0v2M6 12v2M0 7h2M2 3l1 1M10 3l-1 1" stroke="#c99c24" /><RedX /></>, 5],
  [<><circle cx="7" cy="6" r="4.500" fill="#c7e2f5" stroke="#3a76a8" /><path d="M4 13h6" stroke="#3a76a8" /><RedX /></>, 6],
  [<><path d="M0 10h4M4 14V5h10v5M4 9h7M10 5V2h4" stroke="#356f9e" strokeWidth="1.800" /><RedX /></>, 5],
  [<><path d="M0 10h4M4 14V5h8M4 9h5" stroke="#356f9e" strokeWidth="1.800" /><circle cx="12.500" cy="8" r="3" fill="#c7e2f5" stroke="#356f9e" /><path d="M12.500 11v4" stroke="#356f9e" /></>, 5],
  [<><path d="M0 6c1-3 3-2 4 1s3 3 4 0" /><circle cx="7" cy="10" r="2.500" /><circle cx="13" cy="9" r="2.500" /><path d="M9.500 4c3-2 6-1 6 3" /></>, 5],
  [<><circle cx="8" cy="6" r="3.500" fill="#b5daf7" stroke="#3a76a8" strokeWidth="1.500" /><path d="M7 10v3h2v-3" stroke="#444" /></>, 5],
  [<path d="M12 3H1v10h6M4 3v-1M9 8h6v6H9zM10 6h4" stroke="#888" strokeDasharray="2 1" />, 6],
  [<path d="M1 6l4-4h9M1 6h8v8M1 10h8M4 6v8M12 9v5" stroke="#888" strokeDasharray="2.500 1" />, 4],
  [<><path d="M0 4h16M1 1v14M15 1v6M3 2L1 4l2 2M13 2l2 2-2 2" /><path d="M8 10h7v5H8z" fill="#444" /><path d="M10 10V8h3v2M1 13h6" strokeDasharray="1.500 1" /></>, 6],
];

function DrawingView() {
  return (
    <Viewport>
      <ViewTabs>
        <ViewTab>
          <Svg w={15}><path d="M1 1h9v11H1zM1 4h9" fill="#eee" stroke="#666" /><path d="M6 6h9v8H6zM10 3h3v3M9 9v3" fill="#e3e3e3" stroke="#666" /></Svg>
          <Label $ls={-0.05} style={{ width: 95 }}>HVAC -SUBSOLO</Label>
          <Cross size={9} />
        </ViewTab>
        <Svg w={8} h={7}><path d="M0 1h8" stroke="#333" /><path d="M0 3h8L4 7z" fill="#333" stroke="none" /></Svg>
      </ViewTabs>
      <ViewRow>
        <Drawing />
        <ScrollV>
          <Chevron dir="up" />
          <ThumbV $mt={196} $h={17} />
          <Chevron />
        </ScrollV>
        <NavBar>
          <NavDot><Svg w={8}><circle cx="4" cy="4" r="3.300" stroke="#aaa" /><path d="M2.500 2.500l3 3M5.500 2.500l-3 3" stroke="#aaa" /></Svg></NavDot>
          <Svg w={24} h={24}>
            <path d="M21 11V3H12a9 9 0 100 17" stroke="#aaa" strokeWidth="1.500" fill="#ececec" />
            <path d="M8 8h8v8H8z" fill="#fafafa" stroke="#aaa" />
            <path d="M13 17c1-3 5-2 4 0l-4 4h5M20 16v5c5 0 5-5 0-5z" stroke="#8ea6d0" strokeWidth="1.500" />
          </Svg>
          <Caret color="#999" />
          <NavLine />
          <Svg w={18} h={18}><path d="M1 1h10v11H1z" fill="#b9d9a9" stroke="#a5c596" /><circle cx="11" cy="11" r="3" fill="#f3f3f3" stroke="#999" /><path d="M13 13l4 4" stroke="#999" strokeWidth="1.500" /></Svg>
          <Caret color="#999" />
          <NavDot><Svg w={8}><circle cx="4" cy="4" r="3.300" fill="#ddd" stroke="#aaa" /></Svg></NavDot>
        </NavBar>
      </ViewRow>
      <ViewControls>
        <ViewScale>1 : 100</ViewScale>
        {viewIcons.map(([shape, ml], i) => <Slot key={i} $w={16} $ml={ml}><Svg w={15} box="0 0 16 16">{shape}</Svg></Slot>)}
        <Slot $w={8} $ml={8}><Chevron dir="left" /></Slot>
        <ThumbH $w={18} $ml={205} />
        <Slot $w={8} $ml={204}><Chevron dir="right" /></Slot>
        <Slot $w={10} $ml={12}>
          <Svg w={9} h={9} style={{ marginTop: 6 }}><path d="M7 1h2M4 4.500h2M7 4.500h2M1 8h2M4 8h2M7 8h2" stroke="#b5b5b5" strokeWidth="2" /></Svg>
        </Slot>
      </ViewControls>
    </Viewport>
  );
}

const viewsIcon = <path d="M1 4V1h3M12 1h3v3M15 12v3h-3M4 15H1v-3M4.500 4.500h7v7h-7z" stroke="#555" strokeWidth="1.500" />;
const legendIcon = <><path d="M.5 1.500h15v13H.5z" fill="#e6e6e6" stroke="#777" /><path d="M.5 3h15" stroke="#666" strokeWidth="2.500" /><path d="M2.500 7h3M2.500 11h3M8 7h6M8 11h6" stroke="#666" strokeWidth="2" /></>;
const tableIcon = <><path d="M.5 2.500h15v12H.5z" fill="#fafafa" stroke="#777" /><path d="M.5 4h15" stroke="#556" strokeWidth="3" /><path d="M.5 8h15M.5 11h15M5.500 5v9M10.500 5v9" stroke="#99a" strokeWidth="1" /></>;

// [depth, label, kind, icon]
const nodes = [
  [0, 'Vistas (IFSC Revit MEP - Ar Condicionad', 'open', viewsIcon],
  [1, '1. Plantas', 'open'],
  [2, 'HVAC', 'open'],
  [3, 'Planta de piso: HVAC -SUBSO', 'active'],
  [3, 'Planta de piso: HVAC - TÉRREC', 'leaf'],
  [3, 'Planta de piso: HVAC - SUPERIO', 'leaf'],
  [3, 'Planta de piso: HVAC -COBERTU', 'leaf'],
  [1, '2. Vistas 3D', 'open'],
  [2, 'Documentação', 'open'],
  [3, 'Vista 3D: 3D HVAC', 'leaf'],
  [1, '3. Detalhes 2D', 'open'],
  [2, 'DETALHES 2D', 'open'],
  [3, 'Vista de desenho: DETALHE RED', 'leaf'],
  [3, 'Vista de desenho: VISTA FRONT', 'leaf'],
  [1, '5. Cortes', 'closed'],
  [0, 'Legendas', 'open', legendIcon],
  [1, 'Cálculo Simplificado de Carga Térmica E', 'leaf'],
  [0, 'Tabelas/Quantidades (todas)', 'open', tableIcon],
  [1, 'Quantitativo Cabos Elétricos PP (m)', 'leaf'],
  [1, 'Quantitativo da Rede Frigorígena', 'leaf'],
  [1, 'Quantitativo de Equipamentos e Comp', 'leaf'],
  [1, 'Quantitativo Tubos de Cobre + Isolame', 'leaf'],
  [1, 'Quantitativo Tubulações', 'leaf'],
  [1, 'Tubos_Quantitativo Tubos de Cobre +', 'leaf'],
];

function TreeNode({ depth, label, kind, icon }) {
  const leaf = kind === 'leaf' || kind === 'active';
  let spacing = depth === 3 ? -0.25 : -0.38;
  if (kind === 'active') spacing = -0.1;
  if (icon === viewsIcon) spacing = -0.27;
  return (
    <TreeRow $bold={kind === 'active'}>
      {Array.from({ length: depth }, (_, i) => <Cell key={i} $guide={i < 2} />)}
      <Cell $guide={leaf}>
        {leaf ? <Dash $w={10} $ml={10} /> : (
          <Expander>
            <Svg w={8}><path d={kind === 'closed' ? 'M0 4h8M4 0v8' : 'M0 4h8'} stroke="#666" strokeWidth="1" /></Svg>
          </Expander>
        )}
      </Cell>
      {icon ? <Slot $w={20} style={{ height: 16 }}><Svg w={15} box="0 0 16 16">{icon}</Svg></Slot> : <Dash $w={5} />}
      <TreeText $root={!!icon} $hl={icon === viewsIcon} $ls={spacing}>{label}</TreeText>
    </TreeRow>
  );
}

function ProjectBrowser() {
  return (
    <Browser>
      <PanelHeader style={{ paddingRight: 4 }}>
        <Label $color="#444" $ls={-0.29}>Navegador de projeto - Projeto_AC_fim vide...</Label>
        <Cross size={9} />
      </PanelHeader>
      <TreeArea>
        <Tree>
          {nodes.map(([depth, label, kind, icon], i) => (
            <TreeNode key={i} depth={depth} label={label} kind={kind} icon={icon} />
          ))}
        </Tree>
        <ScrollV $pad="5px 0 2px">
          <Chevron dir="up" />
          <ThumbV $mt={3} $h={335} />
          <Chevron />
        </ScrollV>
      </TreeArea>
      <TreeScroll>
        <Chevron dir="left" />
        <ThumbH $w={151} $ml={4} />
        <Slot $w={8} $ml={69}><Chevron dir="right" /></Slot>
      </TreeScroll>
    </Browser>
  );
}

const pick = <path d="M7 4v10l2.500-2 2 4 1.800-1-2-3.500H15z" fill="#fff" stroke="#333" strokeWidth="1" />;
const redMark = <path d="M9 0l6 6M15 0L9 6" stroke="#b8242c" strokeWidth="2.300" />;
const selectIcons = [
  <><path d="M1 4h7v4H3a2 2 0 010-4z" fill="#f0c648" stroke="#b8902a" />{redMark}{pick}</>,
  <><path d="M0 11l8-8h5l-6 8z" fill="#e7f3fb" stroke="#3c6e9a" /><path d="M0 12l7 1" stroke="#3c9cd8" />{redMark}{pick}</>,
  <><path d="M1 2h9v3H1zM3 5v4h5V5M0 10h11M5 10v5" fill="#f1a64b" stroke="#a85a22" />{redMark}{pick}</>,
  <><path d="M1 4l5-2v12l-5 1z" fill="#bfe4f8" stroke="#2f7ab3" /><path d="M6 2h4v12H6" fill="#8dcdf0" stroke="#2f7ab3" />{redMark}{pick}</>,
  <><path d="M5 0v10M0 5h10M3.500 1.500L5 0l1.500 1.500M3.500 8.500L5 10l1.500-1.500M1.500 3.500L0 5l1.500 1.500" stroke="#222" />{pick}</>,
  <circle cx="8" cy="8" r="5.500" stroke="#a5a5a5" strokeWidth="3" strokeDasharray="3 1.500" />,
  <path d="M0 1h16l-6 7v6l-4 2V8z" fill="#d6d6d6" stroke="#666" />,
];

function Status() {
  return (
    <StatusBar>
      <StatusField>Selecione as referências, e a seguir clique no espaço vazio</StatusField>
      <Slot $w={18} $ml={4}>
        <Svg w={16}><path d="M0 6h7v9H1z" fill="#a6d4ee" stroke="#3c7fae" /><path d="M10 7h6v7h-4z" fill="#eee" stroke="#555" /><path d="M3 5V2h6V0l4 3.500L9 7V4H6" fill="#6fc04e" stroke="#3e8a2b" /></Svg>
      </Slot>
      <Select $w={204} $h={19} $ml={5} $bg="#fff" $border="#e2e2e2" style={{ marginBottom: 2 }}><SelectText /><Chevron sw={0.8} color="#888" /></Select>
      <Slot $w={16} $ml={5}><Svg w={15}><path d="M1 3h8v3H1zM9 1h4v4l-6 4v6H4V8h4" fill="#999" stroke="#aaa" /></Svg></Slot>
      <Label style={{ marginLeft: 5, width: 20 }}>:0</Label>
      <Slot $w={18} $ml={4}><Svg w={16}><path d="M.7 1h14.600v14H.7z" fill="#eee" stroke="#222" /><path d="M.7 2h14.600" stroke="#222" strokeWidth="2" /><path d="M3 6h3M8 6h5M6 9h7M6 12h7M4 6v6" stroke="#333" /></Svg></Slot>
      <Slot $w={16} $ml={6}><Svg w={15}><path d="M4 0h11v15H4z" fill="#999" stroke="none" /><path d="M0 9h7M5 6l4 3-4 3M9 7l4 5" stroke="#ddd" strokeWidth="1.500" /></Svg></Slot>
      <Select $w={205} $h={19} $ml={6} $bg="#fff" $border="#e2e2e2" $color="#888" style={{ marginBottom: 2 }}>
        <SelectText $ls={-0.05}>Modelo principal</SelectText><Chevron sw={0.8} color="#888" />
      </Select>
      {selectIcons.map((shape, i) => <Slot key={i} $w={18} $ml={i ? (i > 4 ? 5 : 6) : 232}><Svg w={16}>{shape}</Svg></Slot>)}
      <Label>:0</Label>
    </StatusBar>
  );
}

const Chrome = () => (
  <g stroke="none">
    <circle cx="12" cy="12" r="11" fill="#f6c62e" />
    <path d="M12 12L2.500 6.500A11 11 0 0121.500 6.500H12z" fill="#df4234" />
    <path d="M12 12L2.500 6.500A11 11 0 0011 23l5-9z" fill="#35a353" />
    <circle cx="12" cy="12" r="5.200" fill="#fff" /><circle cx="12" cy="12" r="4" fill="#3f7de8" />
  </g>
);

const OfficeDoc = ({ color, letter }) => (
  <g stroke="none">
    <path d="M4 1h15l4 4v17H5z" fill="#f3f7fc" />
    <path d="M1 3l16-1v19H1z" fill="#d5e4f4" />
    <path d="M14 14l9 2v7h-9z" fill="#fff" stroke={color} strokeWidth=".8" />
    <text
      x={letter === 'W' ? 0 : 3}
      y="18.500"
      fontSize="18"
      fontWeight="700"
      fontFamily="Liberation Sans, sans-serif"
      fill={color}
    >
      {letter}
    </text>
  </g>
);

const apps = [
  { icon: <OfficeDoc color="#1f5aa8" letter="W" /> },
  { icon: <Chrome /> },
  { icon: <OfficeDoc color="#2e8b36" letter="X" /> },
  { icon: <g stroke="none"><path d="M1 3h8l2 2h12v16H1z" fill="#e2a93b" /><path d="M1 7h22v14H1z" fill="#fbd568" /><path d="M5 13h14v8h-4v-4H9v4H5z" fill="#4a9bd0" /></g>, open: true },
  { icon: <g stroke="none"><circle cx="12" cy="12" r="9.500" fill="#12a5e5" /><circle cx="7" cy="7" r="6" fill="#12a5e5" /><circle cx="17" cy="17" r="6" fill="#12a5e5" /><text x="7" y="17.500" fontSize="15" fontWeight="700" fill="#fff">S</text></g> },
  { icon: <g stroke="none"><circle cx="12" cy="12" r="11" fill="#1f66b5" /><path d="M4 3c8-5 19 0 19 10 0 4-2 8-5 9 3-7 0-14-7-15z" fill="#4698dd" /><path d="M1 10l14-2 3 7-4 6c-6 1-12-3-13-11z" fill="#f1f4f8" /><path d="M2 10l8 5 6-6" stroke="#9ab" fill="none" /></g> },
  { icon: <g stroke="none"><path d="M1 1h22v22H1z" fill="#d9f03f" /><path d="M4 4h16v16H4z" fill="#111" /><text x="5" y="13" fontSize="9" fontWeight="700" fill="#fff">PC</text><path d="M6 16.500h6v1.500H6z" fill="#fff" /></g> },
  { icon: <><Chrome /><circle cx="18" cy="18" r="6.500" fill="#4b3d38" stroke="none" /><circle cx="18" cy="16.500" r="2.800" fill="#c8947a" stroke="none" /></>, open: true },
  { icon: <><path d="M0 0h24v24H0z" fill="#e2edf7" stroke="none" /><path d="M7 3.500v17.500" stroke="#1b5587" strokeWidth="4" /><path d="M7 5.500h5.500a3.600 3.600 0 010 7.200H9M12.500 13l4.500 8" stroke="#2f7fc0" strokeWidth="3.800" /></>, open: true, active: true },
];

function Tasks() {
  return (
    <TaskBar>
      <StartButton>
        <Svg w={16}><path d="M0 2.500l7-1v6H0zM8 1.300L16 0v7.500H8zM0 8.500h7v6l-7-1zM8 8.500h8V16l-8-1.300z" fill="#fff" stroke="none" /></Svg>
      </StartButton>
      <SearchBox>
        <Svg w={17}><circle cx="10.500" cy="6" r="5" stroke="#222" strokeWidth="1.400" /><path d="M7 9.500L.5 16" stroke="#222" strokeWidth="1.400" /></Svg>
        <Label $size={15} $ls={-0.33} style={{ lineHeight: '20px' }}>Type here to search</Label>
      </SearchBox>
      <TaskItem $w={48}><Svg w={16}><circle cx="8" cy="8" r="6.800" stroke="#f3f3f3" strokeWidth="2.200" /></Svg></TaskItem>
      <TaskItem $w={48}>
        <Svg w={17} h={16}><path d="M0 1v2h11V1M1 5.500h9v5H1zM0 15v-2h11v2M15.500 1v14" stroke="#ccc" /><path d="M14.500 5h2v3h-2z" fill="#ccc" stroke="none" /></Svg>
      </TaskItem>
      <Divider $ml={7} $h={24} $color="#5a5560" />
      {apps.map((app, i) => (
        <TaskItem key={i} $ml={i ? 0 : 12} $open={app.open} $active={app.active}><Svg w={22} box="0 0 24 24">{app.icon}</Svg></TaskItem>
      ))}
      <SpinBox><Chevron dir="up" /><Chevron /></SpinBox>
      <Divider $ml={11} $h={24} $color="#6b4a4e" />
      <Label $size={11.5} style={{ marginLeft: 10, width: 34 }}>Links</Label>
      <TaskItem $w={20}><Chevron dir="up" size={13} color="#e8e0e0" sw={0.8} /></TaskItem>
      <TaskItem $w={18} $ml={12}>
        <Svg w={16}><path d="M1 6h3l4-4v12l-4-4H1zM10 6v4M12 4.500c1 2 1 5 0 7M14 3c2 3 2 7 0 10" stroke="#ddd" /></Svg>
      </TaskItem>
      <TaskItem $w={18} $ml={15}>
        <Svg w={18}><path d="M5 1l4 2.500L5 6 1 3.500zM13 1l4 2.500L13 6 9 3.500zM5 6l4 2.500L5 11 1 8.500zM13 6l4 2.500-4 2.500-4-2.500zM9 10l4 2.500L9 15l-4-2.500z" fill="#f3f3f3" stroke="none" /><circle cx="12.500" cy="13" r="5" fill="#cf2348" stroke="none" /><path d="M10.500 11l4 4M14.500 11l-4 4" stroke="#fff" /></Svg>
      </TaskItem>
      <TaskItem $w={16} $ml={16}>
        <Svg w={14}><path d="M1 13C1 6 6 1 13 1M4.500 13c0-5 3.500-8.500 8.500-8.500M8 13c0-3 2-5 5-5M11 13l2-2" stroke="#ddd" strokeWidth="1.300" /></Svg>
      </TaskItem>
      <TaskItem $w={18} $ml={14}>
        <Svg w={17} h={14}><path d="M5.500 4.500h10v7H5.500z" fill="#eee" stroke="#eee" /><path d="M1 1v2M4 1v2M0 3h5v2L2.500 7z M2.500 7v4.500H5" stroke="#eee" /></Svg>
      </TaskItem>
      <TaskItem $w={18} $ml={18}>
        <Svg w={14} h={12}><path d="M.5.500h13v10H.5zM.5 7.500h13M7 7.500V11" stroke="#c9bcbe" /></Svg>
      </TaskItem>
      <Label $size={11.5} $ls={-0.2} style={{ marginLeft: 17, width: 25 }}>POR</Label>
      <Clock>15:19<br />15/2/2022</Clock>
      <TaskItem $w={28} $ml={8}>
        <Svg w={26} h={26}>
          <path d="M1 3h16v12h-7l-4 4v-4H1z" fill="#f5f5f5" stroke="none" />
          <path d="M4 6h10M4 9h10M4 12h6" stroke="#5a4044" />
          <circle cx="17.500" cy="18.500" r="7" fill="#3b3335" stroke="#aaa" />
          <text x="14.300" y="22.500" fontSize="11" fontWeight="700" fill="#fff" stroke="none">6</text>
        </Svg>
      </TaskItem>
      <Divider $ml={0} $h={40} $color="#6b4a4e" />
    </TaskBar>
  );
}

function App() {
  return (
    <Window>
      <GlobalStyle />
      <Header />
      <RibbonTabs />
      <RibbonPanels />
      <Options />
      <Main>
        <Properties />
        <DrawingView />
        <ProjectBrowser />
      </Main>
      <Status />
      <Tasks />
    </Window>
  );
}

export default App;
